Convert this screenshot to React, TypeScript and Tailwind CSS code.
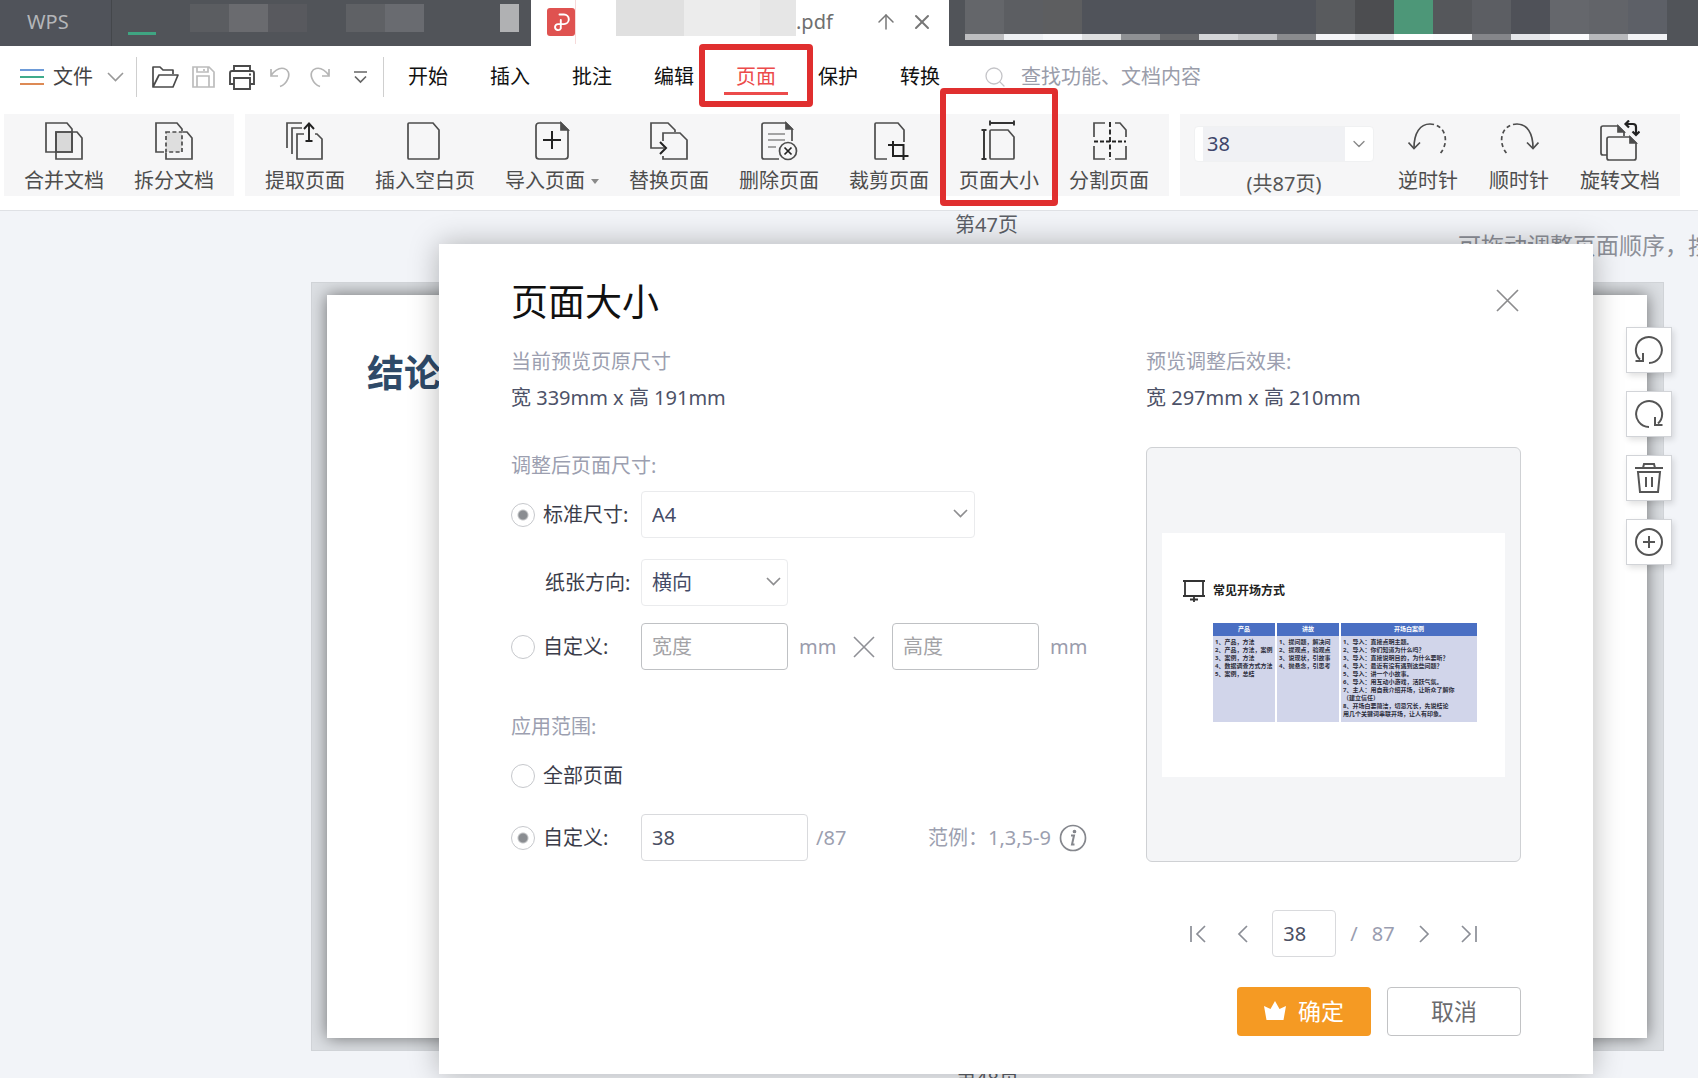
import React, { useState } from 'react';
import { X, ArrowUp, Search, ChevronDown } from 'lucide-react';

const strokeProps = {
  fill: 'none',
  stroke: 'currentColor',
  strokeWidth: 1.7,
} as const;

// Ribbon icons, all on the same 40x40 grid
const icons: Record<string, React.ReactNode> = {
  merge: (
    <>
      <path d="M12 12h16v20H12z" fill="#d9d9d9" />
      <path d="M2 3h21l5 6v23H2z" />
      <path d="M12 12h21l5 6v21H12z" />
    </>
  ),
  split: (
    <>
      <path d="M12 12h16v20H12z" fill="#dedede" strokeDasharray="4 2.4" />
      <path d="M10 32H2V3h21l5 6v2" />
      <path d="M29 12h4l5 6v21H12v-6" />
    </>
  ),
  extract: (
    <>
      <path d="M2 28V3h15M7 34V8h10" />
      <path d="M19 14h-7v25h25V19l-5-5h-2" />
      <path d="M24 21V4M19 9l5-5.5L29 9M20.500 21h7" stroke="#222" strokeWidth="1.9" />
    </>
  ),
  blank: <path d="M4 3h24l6 7v28a1 1 0 0 1-1 1H4a1 1 0 0 1-1-1V4a1 1 0 0 1 1-1z" />,
  import: (
    <>
      <path d="M7 3h22l7 7v26a3 3 0 0 1-3 3H7a3 3 0 0 1-3-3V6a3 3 0 0 1 3-3z" />
      <path d="M29 3v7h7z" fill="currentColor" />
      <path d="M20 11v18M11 20h18" stroke="#222" strokeWidth="2" />
    </>
  ),
  replace: (
    <>
      <path d="M15 28H2V3h17l7 7v2" />
      <path d="M14 21v-8h17l7 7v19H14v-3" />
      <path d="M11 22l6 6-6 6" stroke="#222" strokeWidth="2" />
    </>
  ),
  remove: (
    <>
      <path d="M20 39H5a2 2 0 0 1-2-2V5a2 2 0 0 1 2-2h22l6 6v12" />
      <path d="M27 3v6h6z" fill="currentColor" />
      <path d="M9 14h17M9 20h17M9 27h8" stroke="#888" />
      <circle cx="29" cy="31" r="8.500" />
      <path d="M25.500 27.500l7 7M32.500 27.500l-7 7" stroke="#222" />
    </>
  ),
  crop: (
    <>
      <path d="M18 39H7a1 1 0 0 1-1-1V4a1 1 0 0 1 1-1h22l6 7v12" />
      <path d="M24 21v15h15.500M19 25h15.500v15" stroke="#222" strokeWidth="2" />
    </>
  ),
  size: (
    <>
      <path d="M12 10h17l6 7v21a1 1 0 0 1-1 1H12a1 1 0 0 1-1-1V11a1 1 0 0 1 1-1z" />
      <path d="M11 3h24M11 0.500v5M35 0.500v5M5 10v29M2.500 10h5M2.500 39h5" stroke="#333" strokeWidth="1.9" />
    </>
  ),
  divide: (
    <>
      <path d="M16 3H5v14M26 3h5l6 7v7M5 26v13h11M26 39h11V26" />
      <path d="M21 2v38" stroke="#222" strokeDasharray="5 2.500" strokeWidth="1.9" />
      <path d="M5 21.500h32" stroke="#222" strokeDasharray="4 2" strokeWidth="1.9" />
    </>
  ),
  ccw: (
    <>
      <path d="M22 4C12 4 6 13 6 28" />
      <path d="M0.500 22.500L6 28.500l6-6" />
      <path d="M22 4c15 0 21 18 9 31" strokeDasharray="4 3" />
    </>
  ),
  cw: (
    <>
      <path d="M18 4c10 0 16 9 16 24" />
      <path d="M28 22.500l6 6 5.500-6" />
      <path d="M18 4C3 4-3 22 9 35" strokeDasharray="4 3" />
    </>
  ),
  rotate: (
    <>
      <path d="M7 35H3a2 2 0 0 1-2-2V8a2 2 0 0 1 2-2h15l6 6v4" />
      <path d="M18 6v6h6z" fill="currentColor" />
      <path d="M9 17h21l6 6v15a2 2 0 0 1-2 2H9a2 2 0 0 1-2-2V19a2 2 0 0 1 2-2z" />
      <path d="M30 17v6h6z" fill="currentColor" />
      <path d="M26 4h7a3 3 0 0 1 3 3v7M29 0.500L25.500 4 29 7.500M32.500 11.500L36 15l3.500-3.500" stroke="#222" strokeWidth="2.200" />
    </>
  ),
};

const pageTools = [
  { icon: 'extract', label: '提取页面' },
  { icon: 'blank', label: '插入空白页' },
  { icon: 'import', label: '导入页面', caret: true },
  { icon: 'replace', label: '替换页面' },
  { icon: 'remove', label: '删除页面' },
  { icon: 'crop', label: '裁剪页面' },
  { icon: 'size', label: '页面大小', marked: true },
  { icon: 'divide', label: '分割页面' },
];

const menuTabs = ['开始', '插入', '批注', '编辑', '页面', '保护', '转换'];

// Masked window tabs: upper block and the strip under it
const maskedTabs = [
  ['bg-[#64666a]', 'bg-[#bdbec0]'],
  ['bg-[#5c5e62]', 'bg-[#eef0f3]'],
  ['bg-[#5d5e60]', 'bg-[#f6f7f9]'],
  ['bg-[#50535a]', 'bg-[#dedfe0]'],
  ['bg-[#50535a]', 'bg-[#8f9194]'],
  ['bg-[#50535a]', 'bg-[#68696c]'],
  ['bg-[#50535a]', 'bg-[#d4d5d8]'],
  ['bg-[#50535a]', 'bg-[#c2c3c6]'],
  ['bg-[#50535a]', 'bg-[#8a8b8e]'],
  ['bg-[#595b5e]', 'bg-[#f5f5f8]'],
  ['bg-[#4c4d50]', 'bg-[#e3e5e8]'],
  ['bg-[#4d9778]', 'bg-[#ffffff]'],
  ['bg-[#55575b]', 'bg-[#fcfcfd]'],
  ['bg-[#5c5e63]', 'bg-[#85868a]'],
  ['bg-[#4f5158]', 'bg-[#e5e6ea]'],
  ['bg-[#65676c]', 'bg-[#fcfcfd]'],
  ['bg-[#626469]', 'bg-[#b8b9bc]'],
  ['bg-[#5d6067]', 'bg-[#f2f3f6]'],
];

const slideColumns = [
  ['1、产品，方法', '2、产品，方法，案例', '3、案例，方法', '4、数据调查方式方法', '5、案例，总结'],
  ['1、提问题，解决问', '2、提观点，验观点', '3、说现状，引故事', '4、抛悬念，引思考'],
  [
    '1、导入：直接点明主题。',
    '2、导入：你们知道为什么吗？',
    '3、导入：直接说明目的，为什么要听？',
    '4、导入：最近有没有遇到这些问题？',
    '5、导入：讲一个小故事。',
    '6、导入：用互动小游戏，活跃气氛。',
    '7、主人：用自我介绍开场，让听众了解你',
    '（建立信任）',
    '8、开场白要简洁，切忌冗长，先说结论',
    '用几个关键词串联开场，让人有印象。',
  ],
];

interface ToolButtonProps {
  icon: string;
  label: string;
  caret?: boolean;
  marked?: boolean;
}

const ToolButton: React.FC<ToolButtonProps> = ({ icon, label, caret, marked }) => (
  <button type="button" className="relative flex shrink-0 flex-col items-center pt-1.5 text-[#4d4d4d]">
    <svg width="40" height="41" viewBox="0 0 40 41" {...strokeProps}>
      {icons[icon]}
    </svg>
    <span className="mt-2 flex items-center whitespace-nowrap text-xl leading-6">
      {label}
      {caret && (
        <svg className="ml-1.5" width="8" height="5" viewBox="0 0 8 5">
          <path d="M0 0h8L4 5z" fill="#8a8a8a" />
        </svg>
      )}
    </span>
    {marked && (
      <span className="pointer-events-none absolute -inset-x-[19px] -top-[26px] z-20 h-[118px] rounded border-[6px] border-[#e02f2f]" />
    )}
  </button>
);

const TitleBar = () => (
  <div className="flex h-[46px] bg-[#515459] text-[#b4b6b9]">
    <div className="flex w-[111px] shrink-0 items-center bg-[#50535a] pb-0.5 pl-[27px] text-xl leading-6">WPS</div>
    <div className="flex w-[420px] shrink-0 items-start border-l border-[#44474b]">
      <span className="ml-4 mt-8 h-[3px] w-7 bg-[#3fa582]" />
      <div className="ml-[34px] mt-1 flex h-7">
        <span className="w-[39px] bg-[#5b5d61]" />
        <span className="w-[39px] bg-[#6a6b6f]" />
        <span className="w-[39px] bg-[#58595e]" />
        <span className="w-[39px]" />
        <span className="w-[39px] bg-[#5f6165]" />
        <span className="w-[39px] bg-[#696b70]" />
      </div>
      <span className="ml-[76px] mt-1 h-7 w-[19px] bg-[#b0b1b3]" />
    </div>
    <div className="flex w-[418px] shrink-0 items-center bg-white pb-0.5 pl-4">
      <svg width="28" height="28" viewBox="0 0 28 28">
        <rect width="28" height="28" rx="3" fill="#df5250" />
        <path
          d="M12.500 6.500h4.500a4.800 4.800 0 0 1 0 9.600h-6a3 3 0 1 0 2.800 4.200v-8.300"
          fill="none"
          stroke="#fff"
          strokeWidth="1.9"
          strokeLinecap="round"
        />
      </svg>
      <span className="h-full w-px bg-[#f6dada]" />
      <div className="ml-10 flex h-9 self-start">
        <span className="w-[68px] bg-[#e0e0e0]" />
        <span className="w-[76px] bg-[#ececec]" />
        <span className="w-9 bg-[#e6e6e6]" />
      </div>
      <span className="w-[78px] text-xl leading-6 text-[#6f6f6f]">.pdf</span>
      <button type="button" aria-label="置顶">
        <ArrowUp className="h-6 w-6 text-[#777]" strokeWidth={1.5} />
      </button>
      <button type="button" aria-label="关闭标签" className="ml-3">
        <X className="h-6 w-6 text-[#777]" strokeWidth={2} />
      </button>
    </div>
    <div className="flex min-w-0 flex-1 overflow-hidden pl-4">
      {maskedTabs.map(([block, strip], i) => (
        <div key={i} className="flex h-10 w-[39px] shrink-0 flex-col">
          <span className={`flex-1 ${block}`} />
          <span className={`h-1.5 ${strip}`} />
        </div>
      ))}
    </div>
  </div>
);

const MenuBar = () => (
  <div className="flex h-[68px] items-center pb-1.5">
    <button type="button" className="ml-5 flex items-center text-xl leading-6 text-[#444]">
      <svg width="24" height="18" viewBox="0 0 24 18" fill="none" strokeWidth="2">
        <path d="M0 2h24" stroke="#6d9bd8" />
        <path d="M0 9h24" stroke="#3fab8b" />
        <path d="M0 16h24" stroke="#dd8a55" />
      </svg>
      <span className="ml-[9px]">文件</span>
      <svg className="ml-3.5" width="17" height="10" viewBox="0 0 17 10" fill="none" stroke="#999" strokeWidth="1.6">
        <path d="M1 1l7.500 7.500L16 1" />
      </svg>
    </button>
    <span className="ml-3 h-10 w-px bg-[#cfcfcf]" />
    <button type="button" aria-label="打开" className="ml-3.5 text-[#4a4a4a]">
      <svg width="28" height="24" viewBox="0 0 28 24" {...strokeProps} strokeLinejoin="round">
        <path d="M2 22V2h7l3 3h10v4M2 22L8 10h19l-5 12H2z" />
      </svg>
    </button>
    <button type="button" aria-label="保存" className="ml-3 text-[#bcbcbc]">
      <svg width="24" height="24" viewBox="0 0 24 24" {...strokeProps}>
        <path d="M2 2h16l5 5v15H2zM6 22V11h12v11M6 2v5h11V2M13 4v2" />
      </svg>
    </button>
    <button type="button" aria-label="打印" className="ml-3.5 text-[#4a4a4a]">
      <svg width="26" height="27" viewBox="0 0 26 27" {...strokeProps} strokeWidth={1.9}>
        <path d="M5 7V2h16v5M5 20H1V9a2 2 0 0 1 2-2h20a2 2 0 0 1 2 2v11h-4M5 14h16v11H5zM20 10.500h2" />
      </svg>
    </button>
    <button type="button" aria-label="撤销" className="ml-3.5 text-[#b5b5b5]">
      <svg width="22" height="22" viewBox="0 0 22 22" {...strokeProps}>
        <path d="M2 3v7h7M2 9.500C6 4 11 1.500 15 2.500s6 5 4 10-5 7-8 8" />
      </svg>
    </button>
    <button type="button" aria-label="恢复" className="ml-[18px] text-[#b5b5b5]">
      <svg width="22" height="22" viewBox="0 0 22 22" {...strokeProps}>
        <path d="M20 3v7h-7M20 9.500C16 4 11 1.500 7 2.500s-6 5-4 10 5 7 8 8" />
      </svg>
    </button>
    <button type="button" aria-label="更多" className="ml-[23px] text-[#666]">
      <svg width="13" height="14" viewBox="0 0 13 14" {...strokeProps}>
        <path d="M0 2h13M1 6.500l5.500 5.500L12 6.500" />
      </svg>
    </button>
    <span className="ml-4 h-10 w-px bg-[#cfcfcf]" />
    <nav className="ml-[3px] flex">
      {menuTabs.map((tab) =>
        tab === '页面' ? (
          <button key={tab} type="button" className="relative flex w-[82px] justify-center text-xl leading-6 text-[#ec4b4b]">
            {tab}
            <span className="absolute -bottom-1.5 h-[3px] w-16 bg-[#ec4b4b]" />
            <span className="pointer-events-none absolute -inset-x-4 -top-[21px] h-[63px] rounded border-[6px] border-[#e02f2f]" />
          </button>
        ) : (
          <button key={tab} type="button" className="w-[82px] text-xl leading-6 text-[#111]">
            {tab}
          </button>
        )
      )}
    </nav>
    <label className="ml-[22px] flex min-w-0 flex-1 items-center">
      <Search className="h-6 w-6 shrink-0 text-[#c4c4c8]" strokeWidth={1.3} />
      <input
        type="text"
        aria-label="搜索"
        placeholder="查找功能、文档内容"
        className="ml-3.5 min-w-0 flex-1 text-xl leading-6 outline-none placeholder:text-[#9a9daa]"
      />
    </label>
  </div>
);

const Ribbon = () => (
  <div className="flex gap-[11px] border-b border-[#dfe1e5] px-1 pb-3.5">
    <div className="flex h-[82px] gap-[30px] bg-[#f6f6f7] px-5">
      <ToolButton icon="merge" label="合并文档" />
      <ToolButton icon="split" label="拆分文档" />
    </div>
    <div className="flex h-[82px] gap-[30px] bg-[#f6f6f7] px-5">
      {pageTools.map((tool) => (
        <ToolButton key={tool.icon} {...tool} />
      ))}
    </div>
    <div className="flex h-[82px] gap-6 bg-[#f6f6f7] pl-3.5 pr-5">
      <div className="flex flex-col items-center pt-3">
        <div className="flex h-[39px] w-[180px] rounded border border-[#f0f1f2] bg-white pl-2">
          <input
            type="text"
            aria-label="当前页"
            defaultValue="38"
            className="min-w-0 flex-1 bg-[#f0f1f4] pl-1 text-xl leading-6 text-[#3e466b] outline-none"
          />
          <button type="button" aria-label="选择页码" className="flex w-7 items-center justify-center">
            <ChevronDown className="h-5 w-5 text-[#888]" strokeWidth={1.6} />
          </button>
        </div>
        <span className="mt-2.5 text-xl leading-6 text-[#555]">(共87页)</span>
      </div>
      <div className="flex gap-[31px]">
        <ToolButton icon="ccw" label="逆时针" />
        <ToolButton icon="cw" label="顺时针" />
        <ToolButton icon="rotate" label="旋转文档" />
      </div>
    </div>
  </div>
);

const radioClass =
  'h-6 w-6 shrink-0 appearance-none rounded-full border border-[#c6c8cc] bg-white checked:bg-[radial-gradient(circle,#8a8d91_0_4px,#ffffff_6px)]';
const inputClass =
  'h-[47px] rounded border bg-white pl-2.5 text-xl leading-6 text-[#4a4f63] outline-none placeholder:text-[#a3a3a6]';

interface SelectBoxProps {
  id: string;
  options: string[];
  className: string;
}

const SelectBox: React.FC<SelectBoxProps> = ({ id, options, className }) => (
  <div className={`relative ${className}`}>
    <select
      id={id}
      aria-label={id === 'paper' ? '标准尺寸' : undefined}
      className="h-[47px] w-full appearance-none rounded border border-[#eaebed] bg-white pl-2.5 text-xl leading-6 text-[#454b66] outline-none"
    >
      {options.map((option) => (
        <option key={option}>{option}</option>
      ))}
    </select>
    <svg
      className="pointer-events-none absolute right-[7px] top-[18px]"
      width="15"
      height="9"
      viewBox="0 0 15 9"
      fill="none"
      stroke="#8e8e90"
      strokeWidth="1.7"
    >
      <path d="M1 1l6.500 6.500L14 1" />
    </svg>
  </div>
);

const SlidePreview = () => (
  <div className="h-[244px] w-full bg-white pl-[21px] pr-7 pt-[46px]">
    <div className="flex items-center">
      <svg width="22" height="24" viewBox="0 0 22 24" fill="none" stroke="#333" strokeWidth="1.8">
        <path d="M0 2h22M2 2v15M20 2v15M0 17h22M11 17v6M7 20.500h8" />
      </svg>
      <h3 className="ml-2 text-xs font-bold leading-4 text-[#222]">常见开场方式</h3>
    </div>
    <table className="ml-[30px] mt-5 w-[264px] table-fixed border-separate border-spacing-0 text-[6px] leading-[8px]">
      <colgroup>
        <col className="w-16" />
        <col className="w-16" />
        <col />
      </colgroup>
      <thead>
        <tr className="text-white">
          <th className="h-[13px] border-r-2 border-white bg-[#4a6fc3] p-0">产品</th>
          <th className="h-[13px] border-r-2 border-white bg-[#4a6fc3] p-0">讲故</th>
          <th className="h-[13px] bg-[#4a6fc3] p-0">开场白案例</th>
        </tr>
      </thead>
      <tbody>
        <tr className="font-bold text-[#2c2d3a]">
          {slideColumns.map((lines, i) => (
            <td
              key={i}
              className="h-[86px] whitespace-nowrap border-r-2 border-white bg-[#d1d5ea] px-0.5 pt-0.5 align-top last:border-r-0"
            >
              {lines.map((line) => (
                <div key={line}>{line}</div>
              ))}
            </td>
          ))}
        </tr>
      </tbody>
    </table>
  </div>
);

const Pager = () => (
  <div className="mt-12 flex h-[47px] items-center justify-center text-[#8b8e96]">
    <button type="button" aria-label="第一页">
      <svg width="18" height="18" viewBox="0 0 18 18" {...strokeProps}>
        <path d="M2 1v16M16 1L8 9l8 8" />
      </svg>
    </button>
    <button type="button" aria-label="上一页" className="ml-[30px]">
      <svg width="11" height="18" viewBox="0 0 11 18" {...strokeProps}>
        <path d="M10 1L2 9l8 8" />
      </svg>
    </button>
    <input type="text" aria-label="预览页码" defaultValue="38" className={`ml-6 w-16 border-[#d9dadd] ${inputClass}`} />
    <span className="ml-3.5 text-xl leading-6 text-[#9a9db0]">/</span>
    <span className="ml-3.5 text-xl leading-6 text-[#9a9db0]">87</span>
    <button type="button" aria-label="下一页" className="ml-6">
      <svg width="11" height="18" viewBox="0 0 11 18" {...strokeProps}>
        <path d="M1 1l8 8-8 8" />
      </svg>
    </button>
    <button type="button" aria-label="最后一页" className="ml-[30px]">
      <svg width="18" height="18" viewBox="0 0 18 18" {...strokeProps}>
        <path d="M16 1v16M2 1l8 8-8 8" />
      </svg>
    </button>
  </div>
);

const PageSizeDialog = () => {
  const [sizeMode, setSizeMode] = useState('standard');
  const [range, setRange] = useState('custom');

  return (
    <div
      role="dialog"
      aria-labelledby="dialog-title"
      className="absolute left-[439px] right-[105px] top-[33px] z-10 bg-white px-[72px] pb-[38px] pt-[34px] shadow-[0_0_28px_rgba(0,0,0,0.28)]"
    >
      <div className="flex items-center justify-between">
        <h2 id="dialog-title" className="text-[37px] font-normal leading-[48px] text-[#111]">
          页面大小
        </h2>
        <button type="button" aria-label="关闭" className="pb-1">
          <svg width="27" height="27" viewBox="0 0 27 27" fill="none" stroke="#8c8c8e" strokeWidth="1.7">
            <path d="M3 3l21 21M24 3L3 24" />
          </svg>
        </button>
      </div>

      <div className="mt-6 flex justify-between">
        <div className="text-xl leading-6 text-[#3b3d4a]">
          <p className="text-[#9c9fb0]">当前预览页原尺寸</p>
          <p className="mt-3 text-[#4d5268]">宽 339mm x 高 191mm</p>

          <p className="mt-11 text-[#9c9fb0]">调整后页面尺寸:</p>
          <div className="mt-[13px] flex items-center">
            <label className="flex w-[130px] items-center gap-2">
              <input
                type="radio"
                name="size"
                className={radioClass}
                checked={sizeMode === 'standard'}
                onChange={() => setSizeMode('standard')}
              />
              标准尺寸:
            </label>
            <SelectBox id="paper" options={['A4', 'A3', 'A5']} className="w-[334px]" />
          </div>
          <div className="mt-[21px] flex items-center">
            <label htmlFor="direction" className="w-[130px] pl-[34px]">
              纸张方向:
            </label>
            <SelectBox id="direction" options={['横向', '纵向']} className="w-[147px]" />
          </div>
          <div className="mt-[17px] flex items-center text-[#9a9cac]">
            <label className="flex w-[130px] items-center gap-2 text-[#3b3d4a]">
              <input
                type="radio"
                name="size"
                className={radioClass}
                checked={sizeMode === 'custom'}
                onChange={() => setSizeMode('custom')}
              />
              自定义:
            </label>
            <input
              type="text"
              aria-label="宽度"
              placeholder="宽度"
              className={`w-[147px] border-[#bfc1c4] ${inputClass}`}
            />
            <span className="ml-[11px] w-[54px]">mm</span>
            <svg width="22" height="22" viewBox="0 0 22 22" fill="none" stroke="#8f9096" strokeWidth="1.6">
              <path d="M1 1l20 20M21 1L1 21" />
            </svg>
            <input
              type="text"
              aria-label="高度"
              placeholder="高度"
              className={`ml-[17px] w-[147px] border-[#bfc1c4] ${inputClass}`}
            />
            <span className="ml-[11px]">mm</span>
          </div>

          <p className="mt-[45px] text-[#9c9fb0]">应用范围:</p>
          <label className="mt-[25px] flex items-center gap-2">
            <input
              type="radio"
              name="range"
              className={radioClass}
              checked={range === 'all'}
              onChange={() => setRange('all')}
            />
            全部页面
          </label>
          <div className="mt-[26px] flex items-center text-[#9c9fb0]">
            <label className="flex w-[130px] items-center gap-2 text-[#3b3d4a]">
              <input
                type="radio"
                name="range"
                className={radioClass}
                checked={range === 'custom'}
                onChange={() => setRange('custom')}
              />
              自定义:
            </label>
            <input
              type="text"
              aria-label="页面范围"
              defaultValue="38"
              className={`w-[167px] border-[#d9dadd] ${inputClass}`}
            />
            <span className="ml-2 w-28">/87</span>
            <span>范例：1,3,5-9</span>
            <svg className="ml-2" width="28" height="28" viewBox="0 0 28 28" fill="none" stroke="#85878d" strokeWidth="1.7">
              <circle cx="14" cy="14" r="12.500" />
              <path d="M12 11.500h3l-2 9h2.500" strokeWidth="2" />
              <circle cx="15.500" cy="7.500" r="1" fill="#85878d" />
            </svg>
          </div>
        </div>

        <div className="w-[375px] text-xl leading-6">
          <p className="text-[#9c9fb0]">预览调整后效果:</p>
          <p className="mt-3 text-[#4d5268]">宽 297mm x 高 210mm</p>
          <div className="mt-[37px] flex h-[415px] items-center rounded-md border border-[#cfd1d4] bg-[#f4f5f7] px-[15px]">
            <SlidePreview />
          </div>
          <Pager />
          <div className="mt-[30px] flex gap-4 text-[23px] leading-7">
            <button
              type="button"
              className="ml-auto flex h-[49px] w-[134px] items-center justify-center gap-3 rounded bg-[#f59a23] pb-0.5 text-white"
            >
              <svg width="22" height="19" viewBox="0 0 22 19" fill="#fff">
                <path d="M0 5l6.500 3L11 0l4.500 8L22 5l-2.500 14h-17z" />
              </svg>
              确定
            </button>
            <button type="button" className="h-[49px] w-[134px] rounded border border-[#c2c3c5] pb-0.5 text-[#6b6b6e]">
              取消
            </button>
          </div>
        </div>
      </div>
    </div>
  );
};

const sideButtonClass =
  'flex h-[46px] w-[46px] items-center justify-center border border-[#d2d4d8] bg-white text-[#555] shadow-[2px_3px_6px_rgba(0,0,0,0.12)]';

const SideButtons = () => (
  <div className="absolute right-[26px] top-[116px] flex flex-col gap-[18px]">
    <button type="button" aria-label="逆时针旋转" className={sideButtonClass}>
      <svg width="30" height="30" viewBox="0 0 30 30" {...strokeProps} strokeWidth={2}>
        <path d="M15 28A13 13 0 1 0 6 24.500" />
        <path d="M1.500 26H9v-8" />
      </svg>
    </button>
    <button type="button" aria-label="顺时针旋转" className={sideButtonClass}>
      <svg width="30" height="30" viewBox="0 0 30 30" {...strokeProps} strokeWidth={2}>
        <path d="M15 28A13 13 0 1 1 24 24.500" />
        <path d="M28.500 26H21v-8" />
      </svg>
    </button>
    <button type="button" aria-label="删除" className={sideButtonClass}>
      <svg width="30" height="32" viewBox="0 0 30 32" {...strokeProps} strokeWidth={2}>
        <path d="M1 6h28M9 6l1-4h10l1 4M4 10h22l-2 20H6zM12 15v10M18 15v10" />
      </svg>
    </button>
    <button type="button" aria-label="添加" className={sideButtonClass}>
      <svg width="30" height="30" viewBox="0 0 30 30" {...strokeProps} strokeWidth={2}>
        <circle cx="15" cy="15" r="13" />
        <path d="M15 9v12M9 15h12" />
      </svg>
    </button>
  </div>
);

const Workspace = () => (
  <main className="relative flex-1 overflow-hidden bg-[#f2f4f8] pt-0.5">
    <p className="ml-[311px] mr-9 text-center text-xl leading-6 text-[#5c5f66]">第47页</p>
    <p className="ml-auto w-[240px] whitespace-nowrap text-[23px] leading-4 text-[#8d9098]">
      可拖动调整页面顺序，按
    </p>
    <div className="ml-[311px] mr-[34px] mt-[29px]">
      <div className="overflow-hidden border border-[#d0d3d7] bg-[#dcdfe3] pb-3 pl-[15px] pr-4 pt-3">
        <article className="aspect-video bg-white pl-10 pt-[54px] shadow-[0_0_16px_rgba(0,0,0,0.5)]">
          <h1 className="text-[37px] font-bold leading-[48px] text-[#2f4a68]">结论</h1>
        </article>
      </div>
      <p className="mt-4 text-center text-xl leading-6 text-[#5c5f66]">第48页</p>
    </div>
    <PageSizeDialog />
    <SideButtons />
  </main>
);

export default function App() {
  return (
    <div className="flex h-screen min-h-[600px] flex-col overflow-hidden bg-white font-['Noto_Sans','Noto_Sans_CJK_SC',sans-serif]">
      <TitleBar />
      <MenuBar />
      <Ribbon />
      <Workspace />
    </div>
  );
}
